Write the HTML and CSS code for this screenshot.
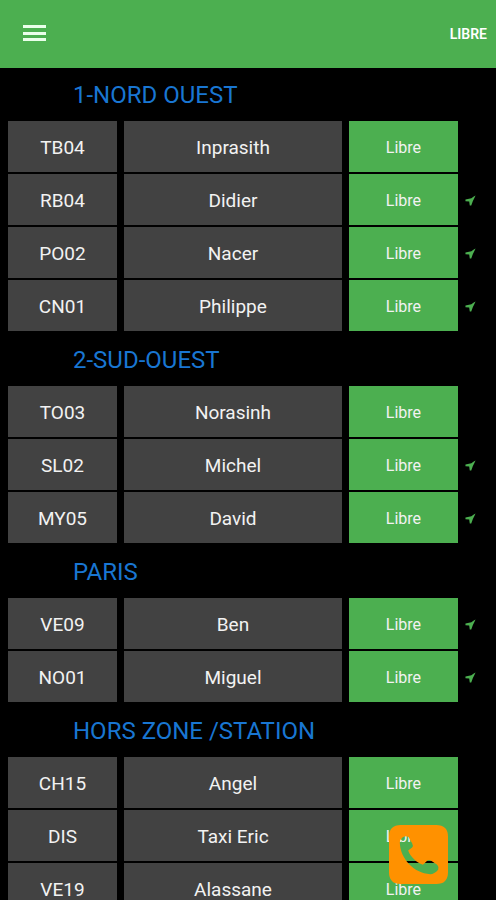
FILE: index.html
```html
<!DOCTYPE html>
<html lang="fr">
<head>
<meta charset="utf-8">
<meta name="viewport" content="width=device-width, initial-scale=1">
<title>Stations</title>
<link rel="stylesheet" href="styles.css">
</head>
<body>
<svg class="defs" aria-hidden="true">
  <symbol id="near" viewBox="0 0 12 12"><path d="M11.500 .5Q9 1.500 7 3.500L.5 5V6.800L4.600 7.200 5.200 11.500H6.800L8.600 6.500Q10 4 11.500 .5Z"/></symbol>
</svg>
<header class="bar">
  <button class="menu" type="button" aria-label="Menu">
    <svg viewBox="0 0 24 18" width="24" height="18"><path d="M1 0h23v3H1zM1 7h23v3H1zM1 13h23v3H1z"/></svg>
  </button>
  <button class="state" type="button">LIBRE</button>
</header>
<main class="list">
  <table class="drivers">
    <colgroup><col class="col-code"><col><col class="col-status"><col class="col-near"></colgroup>
    <tbody>
      <tr><th class="zone" colspan="4" scope="rowgroup">1-NORD OUEST</th></tr>
      <tr><td class="cell">TB04</td><td class="cell">Inprasith</td><td class="free">Libre</td><td class="near"></td></tr>
      <tr><td class="cell">RB04</td><td class="cell">Didier</td><td class="free">Libre</td><td class="near"><svg class="arrow"><use href="#near"/></svg></td></tr>
      <tr><td class="cell">PO02</td><td class="cell">Nacer</td><td class="free">Libre</td><td class="near"><svg class="arrow"><use href="#near"/></svg></td></tr>
      <tr><td class="cell">CN01</td><td class="cell">Philippe</td><td class="free">Libre</td><td class="near"><svg class="arrow"><use href="#near"/></svg></td></tr>
    </tbody>
    <tbody>
      <tr><th class="zone" colspan="4" scope="rowgroup">2-SUD-OUEST</th></tr>
      <tr><td class="cell">TO03</td><td class="cell">Norasinh</td><td class="free">Libre</td><td class="near"></td></tr>
      <tr><td class="cell">SL02</td><td class="cell">Michel</td><td class="free">Libre</td><td class="near"><svg class="arrow"><use href="#near"/></svg></td></tr>
      <tr><td class="cell">MY05</td><td class="cell">David</td><td class="free">Libre</td><td class="near"><svg class="arrow"><use href="#near"/></svg></td></tr>
    </tbody>
    <tbody>
      <tr><th class="zone" colspan="4" scope="rowgroup">PARIS</th></tr>
      <tr><td class="cell">VE09</td><td class="cell">Ben</td><td class="free">Libre</td><td class="near"><svg class="arrow"><use href="#near"/></svg></td></tr>
      <tr><td class="cell">NO01</td><td class="cell">Miguel</td><td class="free">Libre</td><td class="near"><svg class="arrow"><use href="#near"/></svg></td></tr>
    </tbody>
    <tbody>
      <tr><th class="zone" colspan="4" scope="rowgroup">HORS ZONE /STATION</th></tr>
      <tr><td class="cell">CH15</td><td class="cell">Angel</td><td class="free">Libre</td><td class="near"></td></tr>
      <tr><td class="cell">DIS</td><td class="cell">Taxi Eric</td><td class="free">Libre</td><td class="near"></td></tr>
      <tr><td class="cell">VE19</td><td class="cell">Alassane</td><td class="free">Libre</td><td class="near"></td></tr>
    </tbody>
  </table>
</main>
<button class="call" type="button" aria-label="Appeler">
  <svg viewBox="0 0 60 60" width="59" height="59"><path fill-rule="evenodd" d="M12 0H48Q60 0 60 12V48Q60 60 48 60H12Q0 60 0 48V12Q0 0 12 0ZM15 12Q11 14 11 18C11.500 34 25 49 42 50Q46 50 50 45.500Q51 42.500 49 40.500L42.500 36Q40 35 38 37L34.500 40.500C28 38.500 21.500 32 19.500 26L23.500 23Q25 21 23.500 18.500L20 12.500Q18 10.500 15 12Z"/></svg>
</button>
</body>
</html>
```
FILE: styles.css
```css
* { box-sizing: border-box; }

body {
  margin: 0;
  height: 100vh;
  display: flex;
  flex-direction: column;
  background: #000;
  color: #f2f2f2;
  font-family: Roboto, "Liberation Sans", sans-serif;
}

button {
  padding: 0;
  border: 0;
  background: none;
  color: #fff;
  font: inherit;
}

.defs {
  position: absolute;
  width: 0;
  height: 0;
}

.bar {
  flex: none;
  display: flex;
  align-items: center;
  justify-content: space-between;
  height: 68px;
  padding: 0 9px 0 22px;
  background: #4caf50;
}

.menu svg {
  display: block;
  fill: #eaffea;
}

.state {
  font-size: 14px;
  font-weight: 600;
}

.list {
  flex: 1;
  min-height: 0;
  overflow-y: auto;
  scrollbar-width: none;
  padding-left: 1px;
}

.drivers {
  width: 100%;
  margin-top: -2px;
  table-layout: fixed;
  border-collapse: separate;
  border-spacing: 7px 2px;
}

.col-code { width: 109px; }
.col-status { width: 109px; }
.col-near { width: 24px; }

.drivers td,
.drivers th {
  height: 51px;
  padding: 1px 0 0;
  text-align: center;
  vertical-align: middle;
}

.drivers .zone {
  padding: 3px 0 0 65px;
  text-align: left;
  color: #1976d2;
  font-size: 24px;
  font-weight: 400;
}

.cell {
  background: #424242;
  font-size: 19px;
}

.free {
  background: #4caf50;
  font-size: 16px;
}

.drivers .near { text-align: left; }

.arrow {
  display: block;
  width: 11px;
  height: 11px;
  fill: #4caf50;
}

.call {
  position: fixed;
  right: 48px;
  bottom: 16px;
}

.call svg {
  display: block;
  fill: #ff9100;
}
```
